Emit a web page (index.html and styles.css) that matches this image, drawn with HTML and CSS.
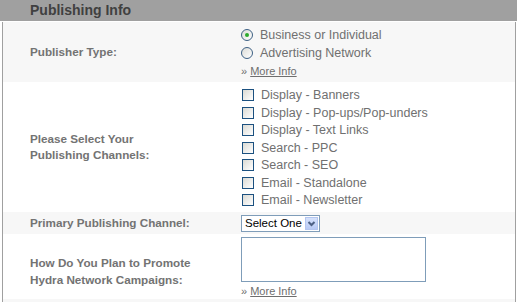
FILE: index.html
```html
<!DOCTYPE html>
<html lang="en">
<head>
	<title>Publishing Info</title>
	<meta charset="utf-8">
	<link rel="stylesheet" href="styles.css">
</head>
<body>
	<section class="panel">
		<h1 class="panelTitle">Publishing Info</h1>

		<div class="rows">
			<!-- publisher type -->
			<div class="row row_alt row_type">
				<div class="label">Publisher Type:</div>
				<div class="field">
					<div class="option"><span class="radio radio_on"></span>Business or Individual</div>
					<div class="option"><span class="radio"></span>Advertising Network</div>
					<div class="moreInfo">&raquo; <a href="#">More Info</a></div>
				</div>
			</div>

			<!-- channels -->
			<div class="row row_channels">
				<div class="label">Please Select Your<br>Publishing Channels:</div>
				<div class="field">
					<div class="option"><span class="check"></span>Display - Banners</div>
					<div class="option"><span class="check"></span>Display - Pop-ups/Pop-unders</div>
					<div class="option"><span class="check"></span>Display - Text Links</div>
					<div class="option"><span class="check"></span>Search - PPC</div>
					<div class="option"><span class="check"></span>Search - SEO</div>
					<div class="option"><span class="check"></span>Email - Standalone</div>
					<div class="option"><span class="check"></span>Email - Newsletter</div>
				</div>
			</div>

			<!-- primary channel -->
			<div class="row row_alt row_primary">
				<div class="label">Primary Publishing Channel:</div>
				<div class="field">
					<div class="selectBox">
						<span class="selectBox_text">Select One</span>
						<span class="selectBox_button">
							<svg viewBox="0 0 13 15" width="13" height="15">
								<polyline points="3.5,6 6.5,9 9.5,6" class="chevron"/>
							</svg>
						</span>
					</div>
				</div>
			</div>

			<!-- promotion -->
			<div class="row row_promote">
				<div class="label">How Do You Plan to Promote<br>Hydra Network Campaigns:</div>
				<div class="field">
					<textarea class="promoteText"></textarea>
					<div class="moreInfo">&raquo; <a href="#">More Info</a></div>
				</div>
			</div>

			<div class="row row_alt row_next"></div>
		</div>
	</section>
</body>
</html>
```

FILE: styles.css
```css
html, body{ margin:0px; background-color:rgb(255,255,255); font-family:"Liberation Sans", Arial, sans-serif; }

.panel{ width:517px; }
.panelTitle{
	margin:0;
	height:21px;
	line-height:21px;
	padding-left:30px;
	background-color:rgb(160,160,160);
	color:rgb(64,64,64);
	font-size:14px;
	font-weight:bold;
}

.rows{
	margin:0 1px 0 2px;
	border-left:1px solid rgb(160,160,160);
	border-right:1px solid rgb(160,160,160);
}
.row{
	display:grid;
	grid-template-columns:238px 1fr;
	align-items:center;
}
.row_alt{ background-color:rgb(247,247,247); }

.label{
	padding-left:27px;
	color:rgb(115,115,115);
	font-size:11.7px;
	font-weight:bold;
	line-height:16.5px;
}

.row_type{ height:60px; margin-top:1px; }
.row_type .field{ padding:3px 0 2px 0; }
.row_channels{ height:130px; }
.row_channels .field{ padding:3px 0 2px 1px; }
.row_primary{ height:22px; }
.row_promote{ height:65px; }
.row_promote .label{ padding-top:9px; }
.row_promote .field{ padding-top:3px; }
.row_next{ height:4px; }

.option{
	display:flex;
	align-items:center;
	height:17.5px;
	color:rgb(112,112,112);
	font-size:12.5px;
	white-space:nowrap;
}
.row_type .option{ height:18px; }

.radio{
	box-sizing:border-box;
	width:12px; height:12px;
	margin-right:7px;
	border:1px solid rgb(61,96,132);
	border-radius:50%;
	background:linear-gradient(135deg, rgb(220,220,215), rgb(255,255,255));
	display:flex;
	align-items:center;
	justify-content:center;
}
.radio_on::after{
	content:"";
	width:4px; height:4px;
	border-radius:50%;
	background-color:rgb(44,170,44);
}

.check{
	box-sizing:border-box;
	width:12px; height:12px;
	margin-right:7px;
	border:1px solid rgb(28,81,128);
	background:linear-gradient(135deg, rgb(218,218,212), rgb(255,255,255));
}

.moreInfo{
	height:18px;
	line-height:18px;
	color:rgb(110,110,110);
	font-size:11px;
}
.moreInfo a{ color:rgb(110,110,110); }

.selectBox{
	box-sizing:border-box;
	display:flex;
	align-items:center;
	justify-content:space-between;
	width:79px; height:17px;
	border:1px solid rgb(127,157,185);
	background-color:rgb(255,255,255);
	padding:0 1px 0 3px;
	font-size:11.5px;
	color:rgb(0,0,0);
}
.selectBox_button{
	display:block;
	width:13px; height:13px;
	background:linear-gradient(rgb(214,226,252), rgb(184,202,245));
	border:1px solid rgb(180,198,240);
	box-sizing:border-box;
	overflow:hidden;
}
.selectBox_button svg{ display:block; margin:-2px 0 0 -1px; }
.chevron{ fill:none; stroke:rgb(77,97,133); stroke-width:2; }

.promoteText{
	display:block;
	box-sizing:border-box;
	width:185px; height:45px;
	margin:0;
	border:1px solid rgb(127,157,185);
	resize:none;
}
```
